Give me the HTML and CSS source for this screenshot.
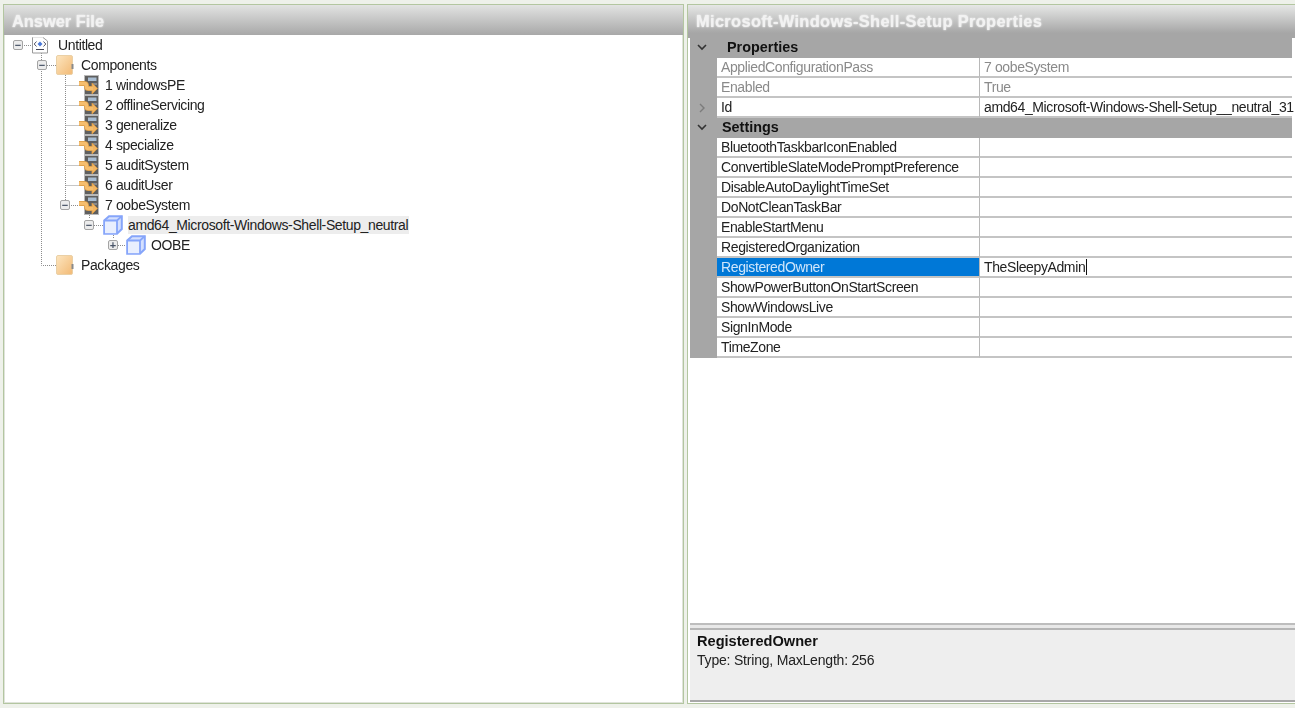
FILE: index.html
```html
<!DOCTYPE html>
<html lang="en">
<head>
<meta charset="utf-8">
<title>Answer File</title>
<link rel="stylesheet" href="styles.css">
</head>
<body>
<svg class="defs" width="0" height="0" aria-hidden="true">
  <defs>
    <linearGradient id="fold" x1="0" y1="0" x2="1" y2="1"><stop offset="0" stop-color="#fde6c0"/><stop offset="1" stop-color="#f2b974"/></linearGradient>
    <symbol id="i-doc" viewBox="0 0 18 18">
      <path d="M1.5 1.5H12" fill="none" stroke="#999" stroke-dasharray="1 1"/>
      <path d="M12 1.5L16.5 5V17H1.5V1.5" fill="#fff" stroke="#9a9a9a"/>
      <path d="M9 5.5L11.5 8L9 10.5L6.5 8Z" fill="#4a78d8"/>
      <path d="M5.5 5.5L3.2 8L5.5 10.5M12.5 5.5L14.8 8L12.5 10.5" fill="none" stroke="#556"/>
      <path d="M5 13.5H13" stroke="#445"/>
    </symbol>
    <symbol id="i-folder" viewBox="0 0 18 20">
      <rect x="0.5" y="0.5" width="16" height="19" rx="1.5" fill="url(#fold)" stroke="#ead0a6"/>
      <rect x="15.5" y="9" width="2" height="5" fill="#8a8a8a"/>
    </symbol>
    <symbol id="i-step" viewBox="0 0 20 20">
      <rect x="5.5" y="0.5" width="14" height="19" fill="#5f5f5f" stroke="#b9b9b9"/>
      <rect x="9" y="2.5" width="8.5" height="3.5" fill="#a9bdd2"/>
      <rect x="14" y="8" width="4" height="2" fill="#8a8a8a"/>
      <path d="M0 8.5H5Q7.5 8.5 7.5 11V11.5Q7.5 13.5 9.5 13.5H13" fill="none" stroke="#d99a45" stroke-width="5"/>
      <path d="M13 8L18.5 13.5L13 19Z" fill="#f3b560" stroke="#d99a45" stroke-width="0.8"/>
      <path d="M0 8.5H5Q7.5 8.5 7.5 11V11.5Q7.5 13.5 9.5 13.5H14" fill="none" stroke="#f6be6e" stroke-width="3.6"/>
    </symbol>
    <symbol id="i-cube" viewBox="0 0 20 20">
      <path d="M1.2 5.5L6 1.2H18.8V14L14 18.8H1.2Z" fill="#d5e0fe" stroke="#86a5fa" stroke-width="2"/>
      <path d="M2 6H14V18.2H2Z" fill="#e9effe"/>
      <path d="M1.2 5.5H14V18.8M14 5.5L18.8 1.2" fill="none" stroke="#86a5fa" stroke-width="1.8"/>
    </symbol>
  </defs>
</svg>

<main class="desk">
  <section class="panel panel-left">
    <h2 class="title">Answer File</h2>
    <div class="tree">
      <svg class="guides" width="420" height="240" aria-hidden="true">
        <path d="M24 10.5H31M41.5 16V230.5H56M47 30.5H56M65.5 36V170M65.5 50.5H79M65.5 70.5H79M65.5 90.5H79M65.5 110.5H79M65.5 130.5H79M65.5 150.5H79M71 170.5H79M89.5 176V184M94 190.5H103M113.5 196V204M118 210.5H126" fill="none" stroke="#8c8c8c" stroke-dasharray="1 1"/>
      </svg>
      <div class="node lvl0"><span class="exp">&#8722;</span><svg class="ico doc"><use href="#i-doc"/></svg><span class="label">Untitled</span></div>
      <div class="node lvl1"><span class="exp">&#8722;</span><svg class="ico folder"><use href="#i-folder"/></svg><span class="label">Components</span></div>
      <div class="node lvl2"><svg class="ico step"><use href="#i-step"/></svg><span class="label">1 windowsPE</span></div>
      <div class="node lvl2"><svg class="ico step"><use href="#i-step"/></svg><span class="label">2 offlineServicing</span></div>
      <div class="node lvl2"><svg class="ico step"><use href="#i-step"/></svg><span class="label">3 generalize</span></div>
      <div class="node lvl2"><svg class="ico step"><use href="#i-step"/></svg><span class="label">4 specialize</span></div>
      <div class="node lvl2"><svg class="ico step"><use href="#i-step"/></svg><span class="label">5 auditSystem</span></div>
      <div class="node lvl2"><svg class="ico step"><use href="#i-step"/></svg><span class="label">6 auditUser</span></div>
      <div class="node lvl2"><span class="exp">&#8722;</span><svg class="ico step"><use href="#i-step"/></svg><span class="label">7 oobeSystem</span></div>
      <div class="node lvl3"><span class="exp">&#8722;</span><svg class="ico cube"><use href="#i-cube"/></svg><span class="label selected">amd64_Microsoft-Windows-Shell-Setup_neutral</span></div>
      <div class="node lvl4"><span class="exp">+</span><svg class="ico cube"><use href="#i-cube"/></svg><span class="label">OOBE</span></div>
      <div class="node lvl1"><svg class="ico folder"><use href="#i-folder"/></svg><span class="label">Packages</span></div>
    </div>
  </section>

  <section class="panel panel-right">
    <h2 class="title title-right">Microsoft-Windows-Shell-Setup Properties</h2>
    <div class="grid">
      <div class="group"><svg class="chev" viewBox="0 0 10 7"><path d="M1 1L5 5L9 1" fill="none" stroke="#333" stroke-width="1.6"/></svg><span class="group-name indent">Properties</span></div>
      <div class="row off"><span class="gut"></span><span class="name">AppliedConfigurationPass</span><span class="val">7 oobeSystem</span></div>
      <div class="row off"><span class="gut"></span><span class="name">Enabled</span><span class="val">True</span></div>
      <div class="row"><span class="gut"><svg class="chev-r" viewBox="0 0 7 10"><path d="M1 1L5 5L1 9" fill="none" stroke="#7c7c7c" stroke-width="1.4"/></svg></span><span class="name">Id</span><span class="val">amd64_Microsoft-Windows-Shell-Setup__neutral_31</span></div>
      <div class="group"><svg class="chev" viewBox="0 0 10 7"><path d="M1 1L5 5L9 1" fill="none" stroke="#333" stroke-width="1.6"/></svg><span class="group-name">Settings</span></div>
      <div class="row"><span class="gut"></span><span class="name">BluetoothTaskbarIconEnabled</span><span class="val"></span></div>
      <div class="row"><span class="gut"></span><span class="name">ConvertibleSlateModePromptPreference</span><span class="val"></span></div>
      <div class="row"><span class="gut"></span><span class="name">DisableAutoDaylightTimeSet</span><span class="val"></span></div>
      <div class="row"><span class="gut"></span><span class="name">DoNotCleanTaskBar</span><span class="val"></span></div>
      <div class="row"><span class="gut"></span><span class="name">EnableStartMenu</span><span class="val"></span></div>
      <div class="row"><span class="gut"></span><span class="name">RegisteredOrganization</span><span class="val"></span></div>
      <div class="row sel"><span class="gut"></span><span class="name">RegisteredOwner</span><span class="val"><span class="caret">TheSleepyAdmin</span></span></div>
      <div class="row"><span class="gut"></span><span class="name">ShowPowerButtonOnStartScreen</span><span class="val"></span></div>
      <div class="row"><span class="gut"></span><span class="name">ShowWindowsLive</span><span class="val"></span></div>
      <div class="row"><span class="gut"></span><span class="name">SignInMode</span><span class="val"></span></div>
      <div class="row"><span class="gut"></span><span class="name">TimeZone</span><span class="val"></span></div>
    </div>
    <div class="help">
      <strong class="help-title">RegisteredOwner</strong>
      <span class="help-text">Type: String, MaxLength: 256</span>
    </div>
  </section>
</main>
</body>
</html>
```

FILE: styles.css
```css
html, body {
  margin: 0;
  height: 100%;
  overflow: hidden;
}
body {
  background: #eef1ea;
  font-family: "Liberation Sans", Arial, sans-serif;
  font-size: 14px;
  letter-spacing: -0.38px;
  color: #222;
}
.defs { position: absolute; }
.desk {
  display: flex;
  gap: 3px;
  height: 708px;
  padding: 4px 0 4px 3px;
  box-sizing: border-box;
  filter: blur(0.3px);
}
.panel {
  display: flex;
  flex-direction: column;
  box-sizing: border-box;
  border: 1px solid #b3c6a0;
  box-shadow: inset 0 0 0 1px #dfe3da;
}
.panel-left { width: 681px; background: #fff; }
.panel-right {
  flex: 1;
  min-width: 0;
  padding-left: 2px;
  padding-right: 3px;
  background: #fff;
  border-right: 0;
  box-shadow: none;
}
.title {
  margin: 0;
  height: 30px;
  flex: none;
  padding: 8px 0 0 8px;
  box-sizing: border-box;
  font-size: 16.4px;
  line-height: 16px;
  font-weight: 700;
  letter-spacing: 0;
  color: #f2f2f2;
  text-shadow: 0 0 2px #fff;
  background: linear-gradient(#e2e3e2, #a8a8a8);
}
.title-right {
  height: 33px;
  margin: 0 -3px 0 -2px;
  padding-left: 8px;
  letter-spacing: 0.35px;
  background: linear-gradient(#e6e7e6 0, #a6a6a6 85%);
}
.tree {
  position: relative;
  flex: 1;
}
.guides {
  position: absolute;
  left: -4px;
  top: 0;
}
.node {
  position: relative;
  display: flex;
  align-items: center;
  height: 20px;
}
.lvl0 { padding-left: 27px; }
.lvl1 { padding-left: 52px; }
.lvl2 { padding-left: 75px; }
.lvl3 { padding-left: 99px; }
.lvl4 { padding-left: 122px; }
.exp {
  position: absolute;
  top: 5px;
  width: 8px;
  height: 8px;
  border: 1.5px solid #a4a4a4;
  border-radius: 2px;
  background: #ececec;
  font-size: 11px;
  font-weight: 700;
  letter-spacing: 0;
  line-height: 8px;
  text-align: center;
  color: #4a5568;
}
.lvl0 .exp { left: 9px; }
.lvl1 .exp { left: 33px; }
.lvl2 .exp { left: 56px; }
.lvl3 .exp { left: 80px; }
.lvl4 .exp { left: 104px; }
.ico { flex: none; }
.doc { width: 18px; height: 18px; margin-right: 9px; }
.folder { width: 18px; height: 20px; margin-right: 7px; }
.step { width: 20px; height: 20px; margin-right: 6px; }
.cube { width: 20px; height: 20px; margin-right: 5px; }
.label { line-height: 18px; white-space: nowrap; }
.selected { background: #ededed; padding-right: 1px; }

.grid {
  flex: 1;
  min-height: 0;
}
.group {
  display: flex;
  align-items: center;
  height: 20px;
  padding-bottom: 2px;
  box-sizing: border-box;
  background: #a6a6a6;
  font-size: 14.4px;
  font-weight: 700;
  letter-spacing: 0;
  color: #111;
}
.chev { width: 10px; height: 7px; margin-left: 7px; flex: none; }
.group-name { margin-left: 15px; }
.indent { margin-left: 20px; }
.row {
  display: grid;
  grid-template-columns: 27px 263px 1fr;
  height: 20px;
  line-height: 18px;
  white-space: nowrap;
}
.gut {
  display: flex;
  align-items: center;
  background: #a6a6a6;
}
.chev-r { width: 7px; height: 10px; margin-left: 9px; }
.name {
  padding-left: 4px;
  border-bottom: 2px solid #c4c4c4;
  border-right: 1px solid #b8b8b8;
}
.val {
  min-width: 0;
  padding-left: 4px;
  border-bottom: 2px solid #c4c4c4;
}
.off .name, .off .val { color: #8a8a8a; }
.sel .name { background: #0078d7; color: #cfe6fb; }
.caret { border-right: 1px solid #111; padding-right: 1px; }
.help {
  flex: none;
  height: 74px;
  margin-bottom: 1px;
  margin-right: -3px;
  box-sizing: border-box;
  display: flex;
  flex-direction: column;
  padding: 2px 7px 0;
  gap: 1px;
  background: #eeeeee;
  border-top: 2px solid #b5b5b5;
  border-bottom: 2px solid #a8a8a8;
  box-shadow: 0 -3px 0 #e8e8e8, 0 -5px 0 #bdbdbd;
}
.help-title { color: #111; line-height: 18px; font-size: 14.6px; letter-spacing: 0; }
.help-text { line-height: 18px; letter-spacing: -0.2px; }
```
